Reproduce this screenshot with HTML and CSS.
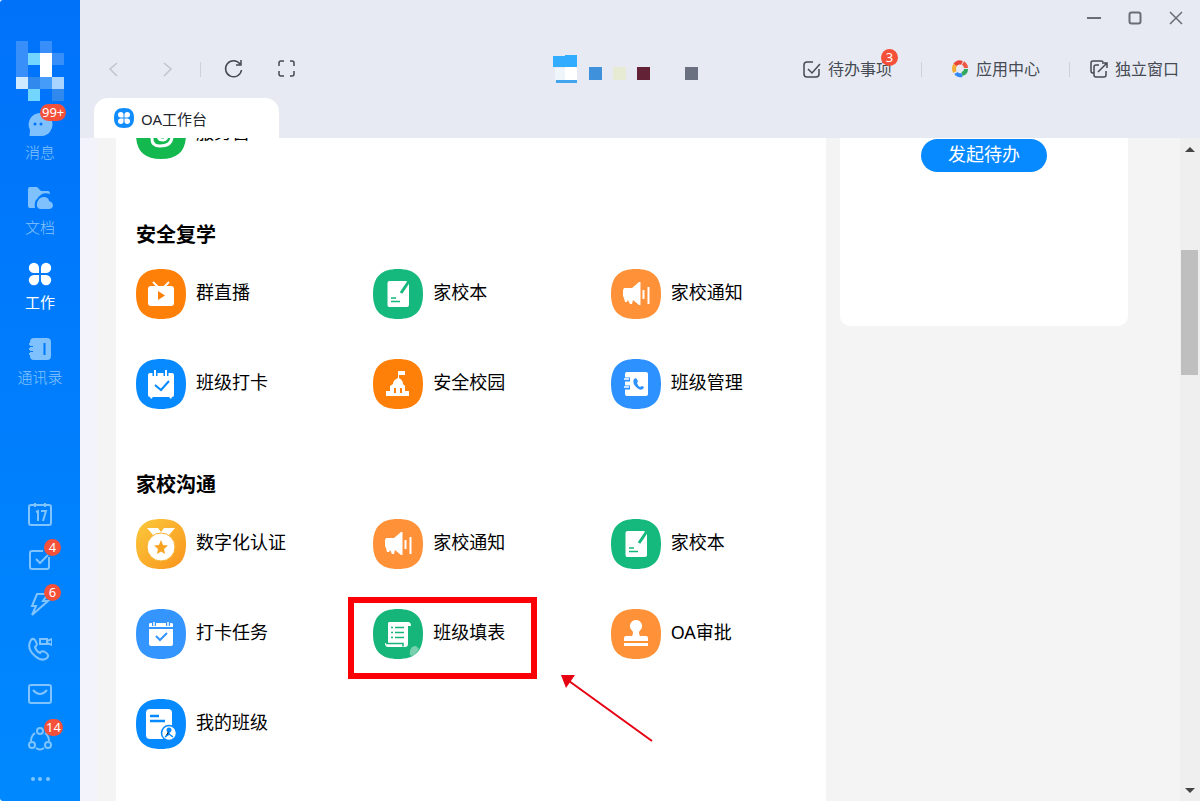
FILE: index.html
```html
<!DOCTYPE html>
<html lang="zh-CN">
<head>
<meta charset="utf-8">
<meta name="viewport" content="width=device-width, initial-scale=1">
<title>OA工作台</title>
<link rel="stylesheet" href="styles.css">
</head>
<body>
<svg class="defs" aria-hidden="true">
  <defs>
    <linearGradient id="gold" x1="0" y1="0" x2="1" y2="1"><stop offset="0" stop-color="#fbc93c"/><stop offset="1" stop-color="#f9941c"/></linearGradient>
    <path id="tile" d="M25 0C42 0 50 8 50 25S42 50 25 50 0 42 0 25 8 0 25 0Z"/>
    <g id="petals"><path d="M11 11V5.500A5.500 5.500 0 1 0 5.500 11ZM13 11V5.500A5.500 5.500 0 1 1 18.500 11ZM11 13V18.500A5.500 5.500 0 1 1 5.500 13ZM13 13V18.500A5.500 5.500 0 1 0 18.500 13Z"/></g>
    <symbol id="notebook" viewBox="0 0 50 50">
      <use href="#tile" fill="#16b97d"/>
      <path fill="#fff" d="M16.500 12H33L36 14V36q0 2-2 2H16q-1.500 0-1.500-2V14q0-2 2-2Z"/>
      <path d="M35.500 13 28 24" stroke="#16b97d" stroke-width="3"/>
      <path d="M18 29h5M18 32.500h9" stroke="#16b97d" stroke-width="1.500"/>
    </symbol>
    <symbol id="speaker" viewBox="0 0 50 50">
      <use href="#tile" fill="#ff9138"/>
      <path fill="#fff" d="M13 19h8l7-6h1.500v23H28l-6-5-1 4h-2l-2-4-1 2h-2l-1-4-1-2v-6Z"/>
      <path d="M32.500 21v9M37.500 18v17" stroke="#fff" stroke-width="2"/>
    </symbol>
  </defs>
</svg>
<div class="app">
  <aside class="sidebar">
    <svg class="avatar" viewBox="0 0 48 60" shape-rendering="crispEdges" role="img" aria-label="头像">
      <path fill="#398ffa" d="M0 0h12v36H0zM24 0h12v12H24zM36 12h12v12H36z"/>
      <path fill="#72d6ff" d="M12 12h12v12H12zM12 48h12v12H12z"/>
      <path fill="#fff" d="M24 12h12v24H24z"/>
      <path fill="#cfeaff" d="M0 36h12v12H0z"/>
      <path fill="#3188ed" d="M12 36h12v12H12zM36 48h12v12H36z"/>
      <path fill="#469cf9" d="M24 36h12v12H24z"/>
      <path fill="#a9d4ff" d="M36 36h12v12H36z"/>
    </svg>
    <nav class="main-nav">
      <a class="nav-item" href="#"><svg viewBox="0 0 28 28"><path fill="#7fc1fc" d="M14 3a11.500 11.500 0 0 1 2 23H3.500L4 20A11.500 11.500 0 0 1 14 3Z"/><circle cx="9" cy="14" r="1.500" fill="#0074fa"/><circle cx="15" cy="14" r="1.500" fill="#0074fa"/></svg><span>消息</span><b class="badge">99+</b></a>
      <a class="nav-item" href="#"><svg viewBox="0 0 28 28"><path fill="#7fc1fc" d="M2 4q0-2 2-2h7l4 4h7q2 0 2 3-8-3-13 5-3 2-2 9H4q-2 0-2-2Z"/><path fill="#7fc1fc" d="M14 24q-4-1-3-6 2-7 8-6 4 1 4 4 4 1 4 5-1 3-4 3Z"/></svg><span>文档</span></a>
      <a class="nav-item active" href="#"><svg viewBox="-3 -3 30 30" fill="#fff"><use href="#petals"/></svg><span>工作</span></a>
      <a class="nav-item" href="#"><svg viewBox="0 0 28 28"><rect x="4" y="3" width="21" height="22" rx="4" fill="#7fc1fc"/><path d="M3 9h4M3 14h4M3 19h4" stroke="#7fc1fc" stroke-width="2"/><path d="M4 11.500h3M4 16.500h3" stroke="#0079fc"/><path d="M18.500 8v12" stroke="#0079fc" stroke-width="2"/></svg><span>通讯录</span></a>
    </nav>
    <nav class="tool-nav">
      <a class="tool" href="#" aria-label="日历"><svg viewBox="0 0 24 24"><rect x="1" y="3" width="22" height="20" rx="2"/><path d="M7 1v4M17 1v4M8 10l2-1v10M13 9h5l-3 10"/></svg></a>
      <a class="tool" href="#" aria-label="待办"><svg viewBox="0 0 24 24"><path d="M15 4H4q-2 0-2 2v14q0 2 2 2h15q2 0 2-2V10M8 12l4 4 8-8"/></svg><b class="badge">4</b></a>
      <a class="tool" href="#" aria-label="DING"><svg viewBox="0 0 24 24"><path d="M9 2h11l-5 7h5L4 23l4-9H4Z"/></svg><b class="badge">6</b></a>
      <a class="tool" href="#" aria-label="视频会议"><svg viewBox="0 0 24 24"><path d="M3 3q3-3 5 2 2 3-1 5 1 4 5 6 2-3 5-1 5 3 2 6-5 4-12-2Q-2 11 3 3ZM12 2h7v5h-7ZM19 4l5-2v6l-5-2"/></svg></a>
      <a class="tool" href="#" aria-label="邮箱"><svg viewBox="0 0 24 24"><rect x="1" y="3" width="22" height="18" rx="2"/><path d="M5 8q7 8 14 0"/></svg></a>
      <a class="tool" href="#" aria-label="协作"><svg viewBox="0 0 24 24"><circle cx="12" cy="4" r="3"/><circle cx="4" cy="18" r="3"/><circle cx="20" cy="18" r="3"/><path d="M7 6q-4 3-4 8M17 6q4 3 4 8M8 21q4 3 8 0"/></svg><b class="badge">14</b></a>
      <a class="tool more" href="#" aria-label="更多"><svg viewBox="0 0 24 14"><g fill="#7fc4ff" stroke="none"><circle cx="5" cy="7" r="2"/><circle cx="12" cy="7" r="2"/><circle cx="20" cy="7" r="2"/></g></svg></a>
    </nav>
  </aside>

  <div class="window">
    <header class="header">
      <div class="window-controls">
        <button type="button" aria-label="最小化"><svg viewBox="0 0 16 16"><path d="M1 8h14" stroke-width="2"/></svg></button>
        <button type="button" aria-label="最大化"><svg viewBox="0 0 16 16"><rect x="2.500" y="2.500" width="11" height="11" rx="2" stroke-width="2"/></svg></button>
        <button type="button" aria-label="关闭"><svg viewBox="0 0 16 16"><path d="M2 2l12 12M14 2 2 14"/></svg></button>
      </div>
      <div class="toolbar">
        <div class="history">
          <button type="button" class="faded" aria-label="后退"><svg viewBox="0 0 20 20"><path d="M13 4 6 10l7 7"/></svg></button>
          <button type="button" class="faded" aria-label="前进"><svg viewBox="0 0 20 20"><path d="M7 4l7 6-7 7"/></svg></button>
          <i class="divider"></i>
          <button type="button" aria-label="刷新"><svg viewBox="0 0 20 20"><path d="M16 5A8 8 0 1 0 17.500 11M17 1v5h-5"/></svg></button>
          <button type="button" aria-label="全屏"><svg viewBox="0 0 20 20"><path d="M2 7V4q0-2 2-2h3M13 2h2q2 0 2 2v3M17 12v3q0 2-2 2h-2M7 17H4q-2 0-2-2v-3"/></svg></button>
        </div>
        <svg class="mosaic" viewBox="0 0 148 28" shape-rendering="crispEdges" aria-hidden="true">
          <path fill="#32acff" d="M0 1h12v-1h12v12H0z"/><path fill="#eef6fb" d="M2 13h11v12H2z"/><path fill="#fff" d="M12 12h12v13H12z"/><path fill="#42a5ed" d="M3 25h21v3H3z"/>
          <path fill="#3f91dc" d="M36 12h13v13H36z"/><path fill="#e7ebd4" d="M60 12h13v13H60z"/><path fill="#642237" d="M84 12h13v13H84z"/><path fill="#6a7080" d="M132 12h13v13h-13z"/>
        </svg>
        <div class="actions">
          <a class="action" href="#"><svg viewBox="0 0 18 18"><path d="M10 2H4Q1 2 1 5v9q0 3 3 3h9q3 0 3-3V9M5 9l4 4 8-9"/></svg><span>待办事项</span><b class="badge">3</b></a>
          <i class="divider"></i>
          <a class="action" href="#"><svg viewBox="0 0 18 18" class="wheel"><path d="M4 5Q7 1 11 3" stroke="#ea4637"/><path d="M12 3q3 2 3 5" stroke="#ee5a43"/><path d="M15 9q0 4-4 5" stroke="#31a95c"/><path d="M11 15q-4 1-6-2" stroke="#3288ef"/><path d="M4 12Q2 9 4 5" stroke="#f5ac35"/></svg><span>应用中心</span></a>
          <i class="divider"></i>
          <a class="action" href="#"><svg viewBox="0 0 18 18"><path d="M4 13H3q-2 0-2-2V3q0-2 2-2h8q2 0 2 1M9 5H6Q4 5 4 7v8q0 2 2 2h8q2 0 2-2v-4M8 12l9-9M12 3h5v5"/></svg><span>独立窗口</span></a>
        </div>
      </div>
      <div class="tabs">
        <a class="tab" href="#"><svg viewBox="0 0 20 20"><use href="#tile" fill="#118cfb" transform="scale(.4)"/><g fill="#fff" transform="translate(4 4) scale(.5)"><use href="#petals"/></g></svg><span>OA工作台</span></a>
      </div>
    </header>

    <div class="content">
      <main class="panel">
        <section class="group clipped">
          <div class="grid">
            <a class="entry" href="#"><svg viewBox="0 0 50 50"><use href="#tile" fill="#13b84e"/><path d="M16 24v6q0 7 8 7 12 0 12-10M22 24v2q0 5 5 5 4 0 5-7" fill="none" stroke="#fff" stroke-width="3"/></svg><span>服务窗</span></a>
          </div>
        </section>
        <section class="group">
          <h2>安全复学</h2>
          <div class="grid">
            <a class="entry" href="#"><svg viewBox="0 0 50 50"><use href="#tile" fill="#ff8008"/><rect x="12" y="17" width="26" height="20" rx="3" fill="#fff"/><path d="m17 13 6 6M33 13l-6 6" stroke="#fff" stroke-width="2"/><path d="M22 22v9l7-4.500Z" fill="#ff8008"/></svg><span>群直播</span></a>
            <a class="entry" href="#"><svg><use href="#notebook"/></svg><span>家校本</span></a>
            <a class="entry" href="#"><svg><use href="#speaker"/></svg><span>家校通知</span></a>
            <a class="entry" href="#"><svg viewBox="0 0 50 50"><use href="#tile" fill="#078aff"/><path fill="#fff" d="M14 14h22q2 0 2 2v20q0 2-2 2H14q-2 0-2-2V16q0-2 2-2ZM14 38h3l-2 2ZM33 38h3l-1 2Z"/><path d="M19 11v6M30 11v6" stroke="#078aff" stroke-width="5"/><path d="M19 11v6M30 11v6" stroke="#fff" stroke-width="2"/><path d="m19 26 6 5 8-9" fill="none" stroke="#078aff" stroke-width="2"/></svg><span>班级打卡</span></a>
            <a class="entry" href="#"><svg viewBox="0 0 50 50"><use href="#tile" fill="#ff8008"/><path fill="#fff" d="M25 12h7v4h-6v3q4 2 4 6l2 2v5h4v5H13v-5h4v-5l3-2q0-4 5-6Z"/><path d="M22 29v5M28 29v5" stroke="#ff8008" stroke-width="2"/></svg><span>安全校园</span></a>
            <a class="entry" href="#"><svg viewBox="0 0 50 50"><use href="#tile" fill="#2d92ff"/><rect x="14" y="13" width="23" height="24" rx="2" fill="#fff"/><path d="M14 20.500h5M14 28.500h5" stroke="#2d92ff" stroke-width="4"/><path d="M13 20h5M13 28h5" stroke="#fff" stroke-width="1.500"/><path fill="#2d92ff" d="m23 20 2-1 2 3-1 2q1 3 3 4l2-1 2 1-1 2q-3 2-7-2-4-4-2-8Z"/></svg><span>班级管理</span></a>
          </div>
        </section>
        <section class="group">
          <h2>家校沟通</h2>
          <div class="grid">
            <a class="entry" href="#"><svg viewBox="0 0 50 50"><use href="#tile" fill="url(#gold)"/><path fill="#fff" d="M11 9h11l3 4 3-4h11l-6 7H17Z"/><circle cx="25" cy="28" r="14" fill="#fff" stroke="#f9b02c" stroke-width="1"/><path fill="#f9a323" d="m25 21 2 5 5 .5-4 3.500 1 5-4-2.500-4 2.500 1-5-4-3.500 5-.5Z"/></svg><span>数字化认证</span></a>
            <a class="entry" href="#"><svg><use href="#speaker"/></svg><span>家校通知</span></a>
            <a class="entry" href="#"><svg><use href="#notebook"/></svg><span>家校本</span></a>
            <a class="entry" href="#"><svg viewBox="0 0 50 50"><use href="#tile" fill="#3495ff"/><path fill="#fff" d="M13 20h24v15q0 2-2 2H15q-2 0-2-2ZM13 15q0-1 2-1h20q2 0 2 1v3H13Z"/><path d="M18 13v4M32 13v4" stroke="#3495ff" stroke-width="4"/><path d="M18 13v4M32 13v4" stroke="#fff" stroke-width="1.500"/><path d="m20 27 4 4 7-7" fill="none" stroke="#3495ff" stroke-width="2"/></svg><span>打卡任务</span></a>
            <a class="entry marked" href="#"><svg viewBox="0 0 50 50"><use href="#tile" fill="#16b57a"/><path fill="#fff" d="M16 13h19q3 0 3 4h-3v18q0 3-3 3H15q-3 0-3-4h3V15q0-2 1-2Z"/><path d="M18 18.500h2M22 18.500h9M18 23.500h2M22 23.500h9M18 28.500h2M22 28.500h9M13 34.500h17v3" stroke="#16b57a" stroke-width="1.500" fill="none"/><path fill="#a0dcc4" fill-opacity=".7" d="M37 42q1-5 6-5l3 3q-3 6-8 7-2-2-1-5Z"/></svg><span>班级填表</span>
              <svg class="arrow" viewBox="0 0 100 80" aria-hidden="true"><path d="M98 72 15 12" stroke="#e60012" stroke-width="2"/><path d="M7 6h14l-9 13Z" fill="#e60012"/></svg></a>
            <a class="entry" href="#"><svg viewBox="0 0 50 50"><use href="#tile" fill="#ff9138"/><path fill="#fff" d="M25 11a6 6 0 0 1 4 10.500q-2 2 0 5.500h6q2 0 2 2v3H13v-3q0-2 2-2h6q2-3 0-5.500A6 6 0 0 1 25 11ZM13 34h24v3H13Z"/></svg><span>OA审批</span></a>
            <a class="entry" href="#"><svg viewBox="0 0 50 50"><use href="#tile" fill="#078aff"/><rect x="10" y="10" width="26" height="30" rx="4" fill="#fff"/><path d="M14 17h9M14 22h15" stroke="#078aff" stroke-width="2.500"/><circle cx="33" cy="34" r="7.500" fill="#fff" stroke="#078aff" stroke-width="1.500"/><circle cx="33" cy="31" r="2.500" fill="#078aff"/><path d="M33 31v4l-4 3M33 35l4 3" stroke="#078aff" stroke-width="1.500"/></svg><span>我的班级</span></a>
          </div>
        </section>
      </main>
      <aside class="todo">
        <button type="button">发起待办</button>
      </aside>
      <div class="scrollbar" aria-hidden="true">
        <svg viewBox="0 0 20 22"><path d="m5 14 5-5 5 5Z"/></svg>
        <div class="track"><div class="thumb"></div></div>
        <svg viewBox="0 0 20 22"><path d="m5 9 5 5 5-5Z"/></svg>
      </div>
    </div>
  </div>
</div>
</body>
</html>
```
FILE: styles.css
```css
*, *::before, *::after { box-sizing: border-box; }
body {
  margin: 0;
  background: #fff;
  color: #111;
  font-family: "Noto Sans", "Noto Sans CJK SC", sans-serif;
  font-size: 18px;
}
a { color: inherit; text-decoration: none; }
button { padding: 0; border: 0; background: none; font: inherit; color: inherit; }
svg { display: block; flex: none; }
.defs { position: absolute; width: 0; height: 0; }

.app { display: flex; height: 100vh; overflow: hidden; }

/* sidebar */
.sidebar {
  flex: 0 0 80px;
  display: flex;
  flex-direction: column;
  align-items: center;
  gap: 9px;
  padding: 41px 0 15px;
  border-radius: 3px 0 0 3px;
  background: linear-gradient(#0072fa, #0089ff);
  color: #86c4fd;
  font-size: 15px;
  font-weight: 300;
}
.avatar { width: 48px; height: 60px; }
.main-nav { display: flex; flex-direction: column; gap: 22px; }
.nav-item {
  position: relative;
  display: flex;
  flex-direction: column;
  align-items: center;
  gap: 4px;
  padding-bottom: 1px;
  line-height: 20px;
}
.nav-item svg { width: 28px; height: 28px; }
.nav-item.active { color: #fff; font-weight: 400; }
.tool-nav { display: flex; flex-direction: column; gap: 21px; margin-top: auto; }
.tool { position: relative; }
.tool svg {
  width: 24px;
  height: 24px;
  fill: none;
  stroke: #7fc4ff;
  stroke-width: 2;
}
.tool.more svg { height: 14px; }
.badge {
  position: absolute;
  min-width: 17px;
  height: 17px;
  padding: 0 4px;
  border-radius: 9px;
  background: #f4503a;
  color: #fff;
  font-size: 13px;
  font-weight: 400;
  line-height: 17px;
  text-align: center;
}
.nav-item .badge { left: 50%; top: -6px; padding: 0 2px; }
.tool .badge { left: 16px; top: -8px; padding: 0 2px; }

/* header */
.window { flex: 1; min-width: 0; display: flex; flex-direction: column; }
.header { background: #e7eaf2; color: #464a54; }
.header svg { fill: none; stroke: currentColor; stroke-width: 1.5; }
.window-controls {
  display: flex;
  justify-content: flex-end;
  align-items: center;
  gap: 25px;
  height: 36px;
  padding-right: 16px;
}
.window-controls svg { width: 16px; height: 16px; color: #6a6d74; }
.toolbar { display: flex; align-items: center; height: 62px; padding: 4px 21px 0 24px; }
.history { display: flex; align-items: center; gap: 33px; }
.history svg { width: 20px; height: 20px; }
.faded { color: #c0c4cc; }
.divider { width: 1px; height: 15px; background: #cdd1da; }
.history .divider { margin: 0 -10px; }
.mosaic { order: 2; width: 148px; height: 28px; }
.header .mosaic, .header .tab svg { stroke: none; }
.toolbar::before, .toolbar::after { content: ""; order: 1; flex: 5; }
.toolbar::after { flex: 2; order: 3; }
.actions { order: 4; display: flex; align-items: center; gap: 29px; font-size: 16px; }
.action { position: relative; display: flex; align-items: center; gap: 7px; line-height: 24px; }
.action:last-child { margin-left: -9px; }
.action svg { width: 18px; height: 18px; }
.header .wheel { stroke-width: 4; }
.action .badge { right: -6px; top: -8px; }
.tabs { display: flex; padding-left: 14px; }
.tab {
  display: flex;
  align-items: center;
  gap: 7px;
  width: 185px;
  height: 40px;
  padding-left: 20px;
  border-radius: 14px 14px 0 0;
  background: #fff;
  color: #23262e;
  font-size: 15px;
}
.tab svg { width: 20px; height: 20px; }

/* content */
.content {
  flex: 1;
  min-height: 0;
  display: flex;
  padding-left: 36px;
  overflow: hidden;
  background: linear-gradient(90deg, #f3f3fb 17px, #f4f4f4 17px);
}
.panel { flex: 1; min-width: 0; padding: 0 20px; background: #fff; color: #000; }
.group { margin-bottom: 60px; }
.group.clipped { margin-top: -29px; }
.group h2 { margin: 0 0 18px; font-size: 20px; font-weight: 700; line-height: 32px; }
.grid { display: grid; grid-template-columns: repeat(3, 1fr); gap: 40px 42px; }
.entry { position: relative; display: flex; align-items: center; gap: 10px; line-height: 24px; white-space: nowrap; }
.entry svg { width: 50px; height: 50px; }
.entry span { padding-bottom: 4px; }
.marked::after {
  content: "";
  position: absolute;
  left: -25px;
  top: -12px;
  width: 189px;
  height: 82px;
  border: 6px solid #fb0007;
}
.entry .arrow { position: absolute; left: 181px; top: 60px; width: 100px; height: 80px; }
.todo {
  flex: 0 0 288px;
  align-self: flex-start;
  margin: 0 52px 0 14px;
  padding-top: 1px;
  min-height: 188px;
  border-radius: 0 0 10px 10px;
  background: #fff;
  text-align: center;
}
.todo button {
  width: 126px;
  height: 33px;
  padding-bottom: 3px;
  border-radius: 17px;
  background: #0789ff;
  color: #fff;
  line-height: 30px;
}
.scrollbar { flex: 0 0 20px; display: flex; flex-direction: column; background: #efefef; }
.scrollbar svg { width: 20px; height: 22px; fill: #444; }
.track { flex: 1; display: flex; flex-direction: column; padding: 0 2px 0 1px; }
.track::before { content: ""; flex: 90; }
.thumb { flex: 125; background: #bfbfbf; }
.track::after { content: ""; flex: 404; }
```
